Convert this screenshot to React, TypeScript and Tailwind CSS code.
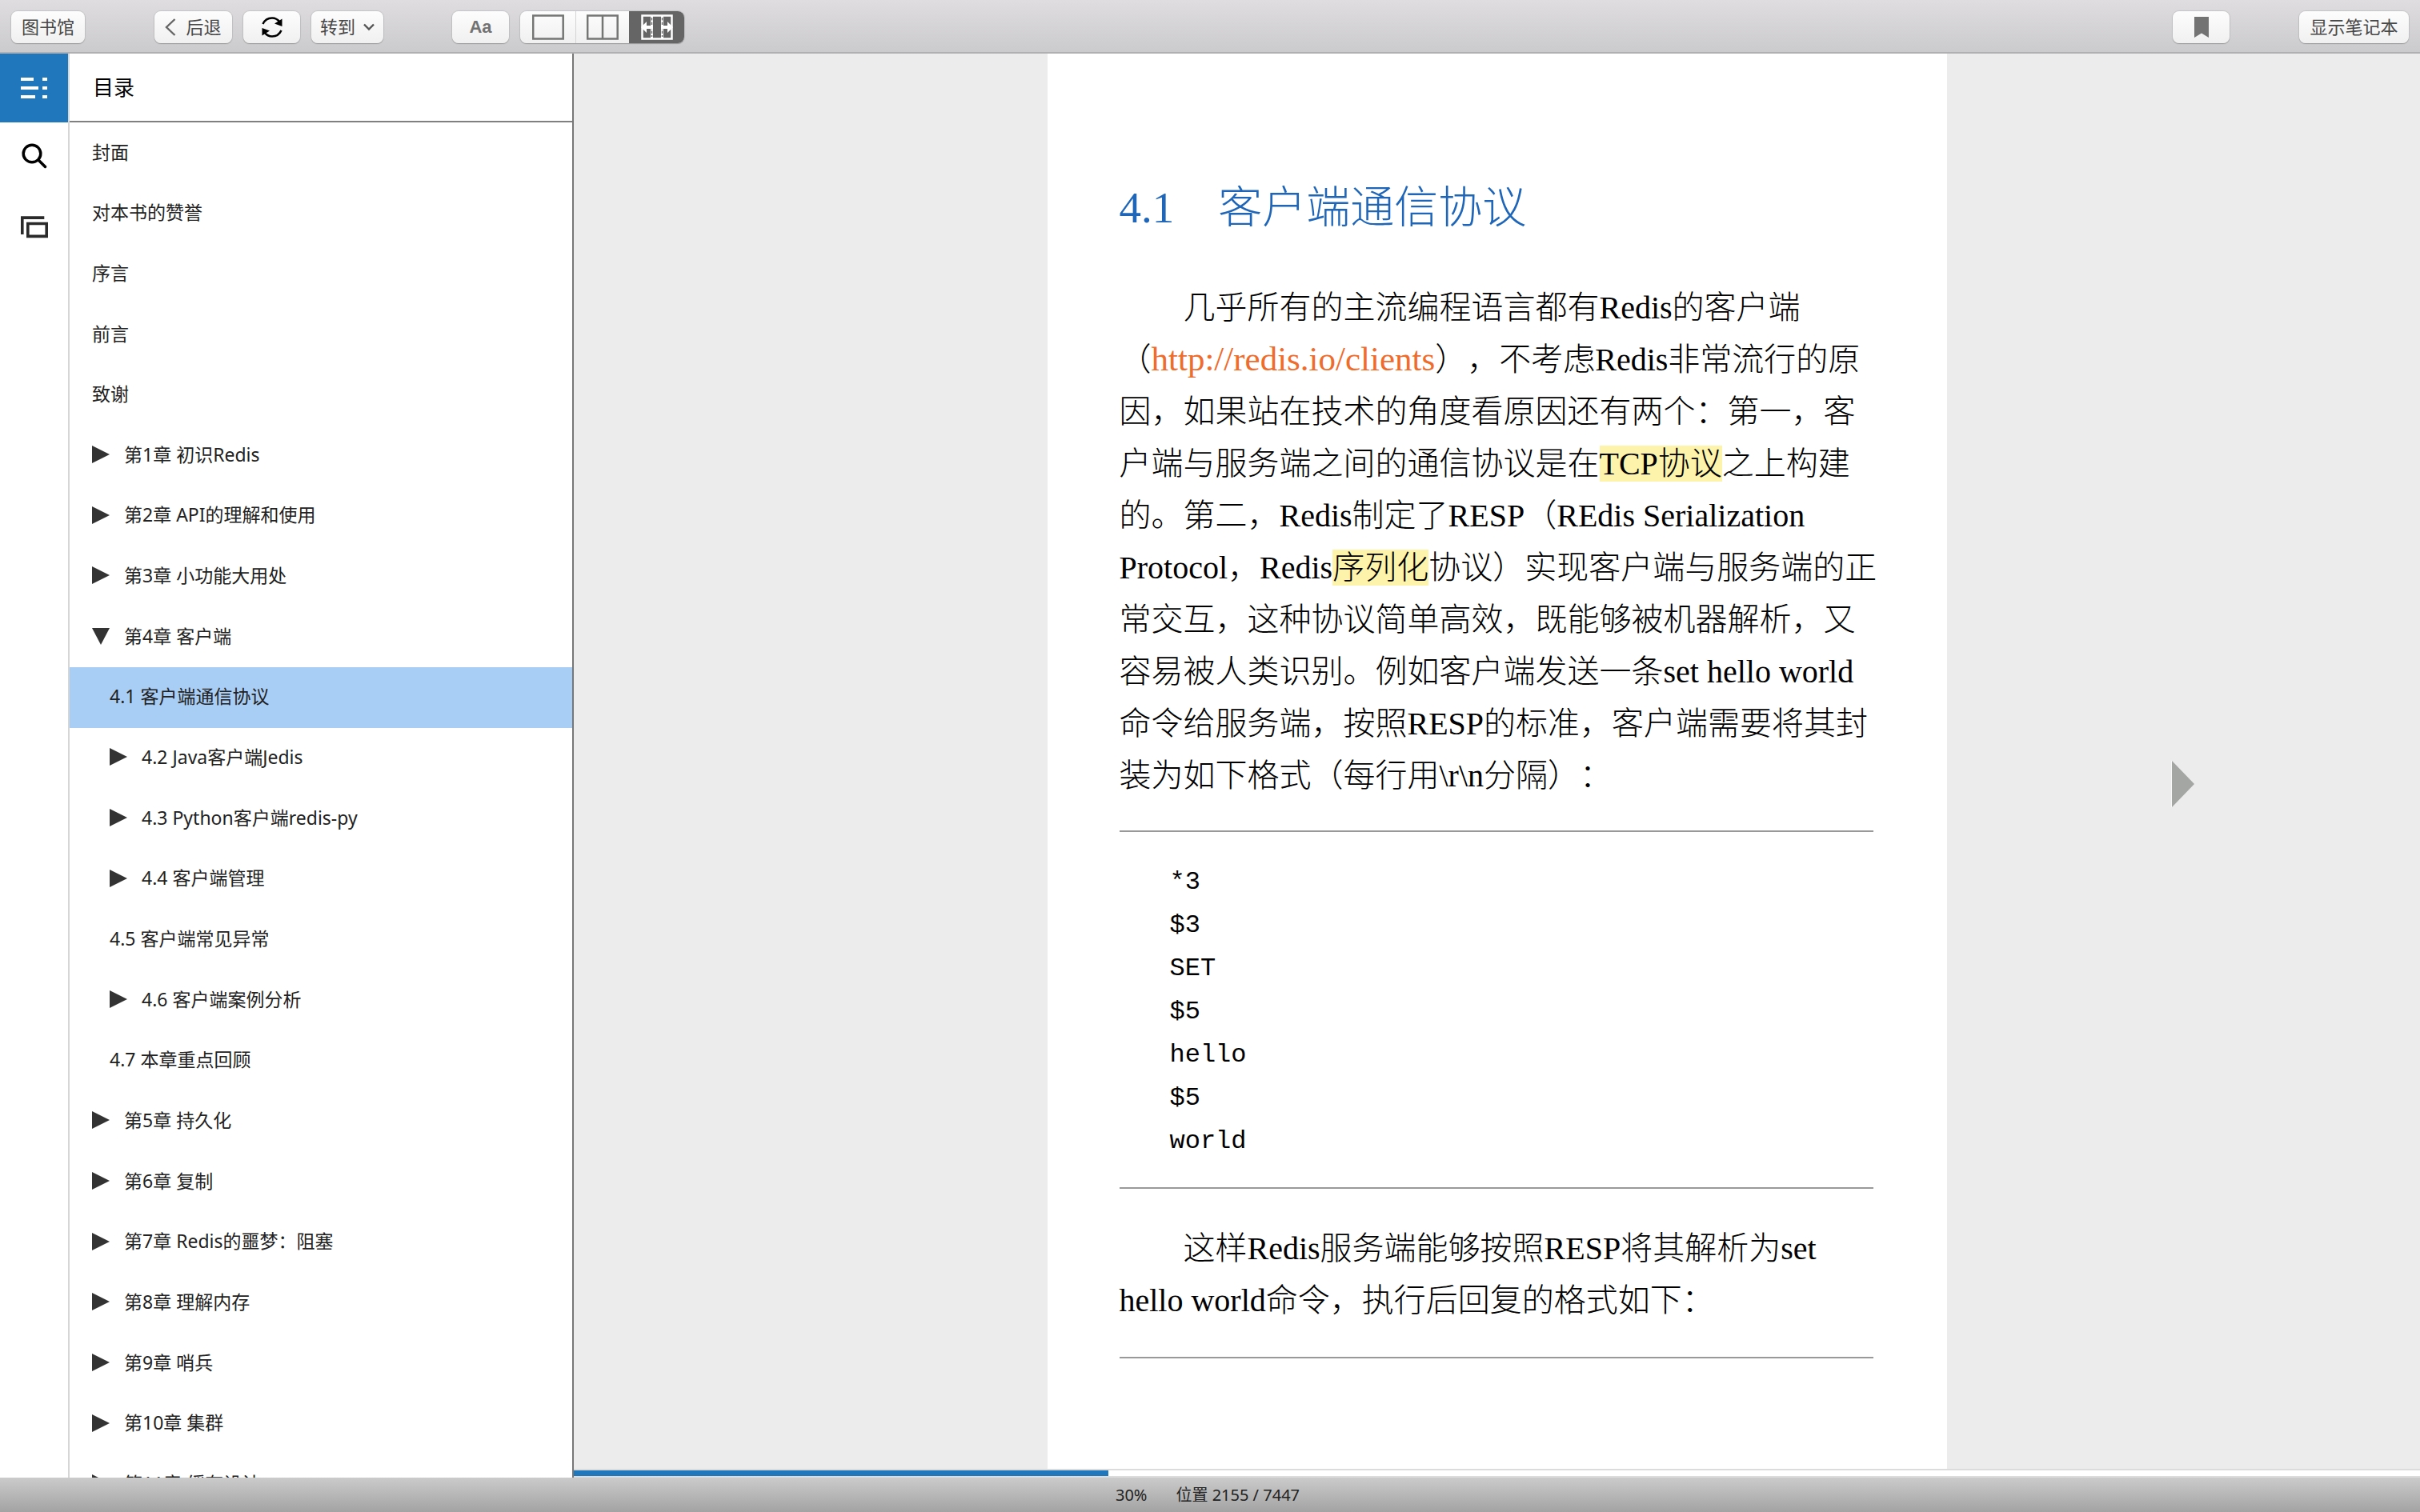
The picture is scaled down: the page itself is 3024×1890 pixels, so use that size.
import type { ReactNode } from "react";

type TocItem = { title: string; level?: 0 | 1; state?: "open" | "closed"; current?: boolean };

const toc: TocItem[] = [
  { title: "封面" },
  { title: "对本书的赞誉" },
  { title: "序言" },
  { title: "前言" },
  { title: "致谢" },
  { title: "第1章 初识Redis", state: "closed" },
  { title: "第2章 API的理解和使用", state: "closed" },
  { title: "第3章 小功能大用处", state: "closed" },
  { title: "第4章 客户端", state: "open" },
  { title: "4.1 客户端通信协议", level: 1, current: true },
  { title: "4.2 Java客户端Jedis", level: 1, state: "closed" },
  { title: "4.3 Python客户端redis-py", level: 1, state: "closed" },
  { title: "4.4 客户端管理", level: 1, state: "closed" },
  { title: "4.5 客户端常见异常", level: 1 },
  { title: "4.6 客户端案例分析", level: 1, state: "closed" },
  { title: "4.7 本章重点回顾", level: 1 },
  { title: "第5章 持久化", state: "closed" },
  { title: "第6章 复制", state: "closed" },
  { title: "第7章 Redis的噩梦：阻塞", state: "closed" },
  { title: "第8章 理解内存", state: "closed" },
  { title: "第9章 哨兵", state: "closed" },
  { title: "第10章 集群", state: "closed" },
  { title: "第11章 缓存设计", state: "closed" },
];

const codeLines = ["*3", "$3", "SET", "$5", "hello", "$5", "world"];

const position = 2155;
const total = 7447;

type ToolButtonProps = { children: ReactNode; className: string; label?: string };

function ToolButton({ children, className, label }: ToolButtonProps) {
  return (
    <button
      type="button"
      aria-label={label}
      className={`flex h-10 items-center justify-center rounded-lg bg-linear-to-b from-[#fdfdfd] to-[#f0f0f0] text-[22px] text-[#484848] shadow-[0_1px_1px_#999,0_0_1px_1px_#c4c3c6] ${className}`}
    >
      {children}
    </button>
  );
}

function ToggleArrow({ open }: { open: boolean }) {
  return (
    <svg width="22" height="22" viewBox="0 0 22 22" fill="#333" aria-hidden="true">
      <path d={open ? "M0 1h22L11 22z" : "M0 0v22L22 11z"} />
    </svg>
  );
}

function Toolbar() {
  return (
    <header className="flex h-[67px] shrink-0 items-center border-b-2 border-[#b0afb1] bg-linear-to-b from-[#dfdde0] to-[#cbcacc] px-3.5 pt-0.5">
      <ToolButton className="w-[92px]">图书馆</ToolButton>
      <div className="ml-[87px] flex gap-3.5">
        <ToolButton className="w-[97px] gap-3">
          <svg width="14" height="22" viewBox="0 0 14 22" fill="none" stroke="#666" strokeWidth="2.4" aria-hidden="true">
            <path d="M12.5 1 2 11l10.5 10" />
          </svg>
          后退
        </ToolButton>
        <ToolButton className="w-[71px]" label="同步">
          <svg width="28" height="28" viewBox="0 0 28 28" fill="none" stroke="#000" strokeWidth="2.6" aria-hidden="true">
            <path d="M2.5 10C5 4.5 9 2.5 14 2.5c4.2 0 7 1.7 9.5 5" />
            <path d="M25.5 18c-2.5 5.5-6.5 7.5-11.5 7.5-4.2 0-7-1.7-9.5-5" />
            <path d="M26.5 3.5V13l-9.5-3.5zM1.5 24.5V15l9.5 3.5z" fill="#000" stroke="none" />
          </svg>
        </ToolButton>
        <ToolButton className="w-[90px] gap-2.5">
          转到
          <svg width="14" height="10" viewBox="0 0 14 10" fill="none" stroke="#555" strokeWidth="2.4" aria-hidden="true">
            <path d="m1 1.5 6 6 6-6" />
          </svg>
        </ToolButton>
      </div>
      <ToolButton className="ml-[86px] w-[71px] font-['Liberation_Sans',sans-serif] font-bold text-[#727272]" label="字体">
        Aa
      </ToolButton>
      <div className="ml-3.5 flex h-10 overflow-hidden rounded-lg bg-linear-to-b from-[#fdfdfd] to-[#f0f0f0] shadow-[0_1px_1px_#999,0_0_1px_1px_#c4c3c6]">
        <button type="button" aria-label="单栏" className="flex w-[70px] items-center justify-center border-r border-[#d4d4d4]">
          <svg width="40" height="32" viewBox="0 0 40 32" fill="none" stroke="#747674" strokeWidth="2.5" aria-hidden="true">
            <path d="M1.2 1.5h37.5v29H1.2z" />
          </svg>
        </button>
        <button type="button" aria-label="双栏" className="flex w-[66px] items-center justify-center">
          <svg width="40" height="32" viewBox="0 0 40 32" fill="none" stroke="#747674" strokeWidth="2.5" aria-hidden="true">
            <path d="M1.2 1.5h37.5v29H1.2zM20 1.5v29" />
          </svg>
        </button>
        <button type="button" aria-label="自动分栏" aria-pressed="true" className="flex w-[69px] items-center justify-center bg-[#656565]">
          <svg width="40" height="32" viewBox="0 0 40 32" fill="none" stroke="#fff" aria-hidden="true">
            <path d="M1.5 1.5h37v29h-37z" strokeWidth="2.5" />
            <path d="M13.5 2v28M26.5 2v28" strokeWidth="3" />
            <path d="M13.5 4v24M26.5 4v24" stroke="#656565" strokeWidth="1.4" strokeDasharray="3.5 2" />
            <path d="m0 16 7-7v5h8v4H7v5zM40 16l-7-7v5h-8v4h8v5z" fill="#fff" stroke="none" />
          </svg>
        </button>
      </div>
      <div className="ml-auto flex gap-[87px]">
        <ToolButton className="w-[71px]" label="书签">
          <svg width="18" height="26" viewBox="0 0 18 26" fill="#737373" aria-hidden="true">
            <path d="M0 0h18v26l-9-5.5L0 26z" />
          </svg>
        </ToolButton>
        <ToolButton className="w-[137px]">显示笔记本</ToolButton>
      </div>
    </header>
  );
}

function Rail() {
  return (
    <nav className="flex w-[87px] shrink-0 flex-col border-r-2 border-[#d6d6d6]" aria-label="工具">
      <button type="button" aria-label="目录" className="flex h-[86px] items-center justify-center bg-[#2077bb]">
        <svg width="34" height="28" viewBox="0 0 34 28" fill="#fff" aria-hidden="true">
          <path d="M0 1h16v4H0zM0 12h22v4H0zM0 23h18v4H0zM27 1h6v4h-6zM27 12h6v4h-6zM27 23h6v4h-6z" />
        </svg>
      </button>
      <button type="button" aria-label="搜索" className="flex h-[84px] items-center justify-center">
        <svg width="32" height="32" viewBox="0 0 32 32" fill="none" stroke="#000" strokeWidth="3.5" strokeLinecap="round" aria-hidden="true">
          <circle cx="13" cy="13" r="10.8" />
          <path d="m21 21 8.5 8.5" />
        </svg>
      </button>
      <button type="button" aria-label="卡片" className="flex h-[94px] items-center justify-center">
        <svg width="34" height="28" viewBox="0 0 34 28" fill="none" stroke="#2a2a2a" strokeWidth="3.6" aria-hidden="true">
          <path d="M1.8 23V2.1h27.5" />
          <path d="M8.8 9.5h23.4v15.9H8.8z" />
        </svg>
      </button>
    </nav>
  );
}

function Sidebar() {
  return (
    <aside className="flex w-[630px] shrink-0 flex-col border-r-2 border-[#777]">
      <h2 className="flex h-[86px] shrink-0 items-center border-b-2 border-[#808080] pl-[29px] text-[26px]">目录</h2>
      <ul className="grid h-[1740px] shrink-0 auto-rows-fr">
        {toc.map((item) => (
          <li key={item.title} className={item.current ? "bg-[#a9cef5]" : ""}>
            <a
              href="#"
              aria-current={item.current ? "page" : undefined}
              className={`flex h-full items-center gap-[18px] pb-0.5 text-[23px] text-[#222] ${item.level ? "pl-[50px]" : "pl-7"}`}
            >
              {item.state && <ToggleArrow open={item.state === "open"} />}
              {item.title}
            </a>
          </li>
        ))}
      </ul>
    </aside>
  );
}

function Rule() {
  return <hr className="border-t-2 border-[#999]" />;
}

function Mark({ children }: { children: ReactNode }) {
  return <mark className="bg-[#fdf3ab] text-black">{children}</mark>;
}

function Page() {
  return (
    <article className="w-[1124px] shrink-0 bg-white pt-40 pr-[92px] pl-[90px] font-['Liberation_Serif','Noto_Sans_CJK_SC',serif] text-[40px] leading-[65px] font-light whitespace-nowrap text-black [text-spacing-trim:space-all]">
      <h1 className="text-[55px] text-[#1f66b8]">4.1　客户端通信协议</h1>
      <p className="mt-[60px] indent-20">
        几乎所有的主流编程语言都有Redis的客户端
        <br />
        （
        <a href="http://redis.io/clients" className="text-[43px] leading-none text-[#ee6c2c]">
          http://redis.io/clients
        </a>
        ），不考虑Redis非常流行的原
        <br />
        因，如果站在技术的角度看原因还有两个：第一，客
        <br />
        户端与服务端之间的通信协议是在<Mark>TCP协议</Mark>之上构建
        <br />
        的。第二，Redis制定了RESP（REdis Serialization
        <br />
        Protocol，Redis<Mark>序列化</Mark>协议）实现客户端与服务端的正
        <br />
        常交互，这种协议简单高效，既能够被机器解析，又
        <br />
        容易被人类识别。例如客户端发送一条set hello world
        <br />
        命令给服务端，按照RESP的标准，客户端需要将其封
        <br />
        装为如下格式（每行用\r\n分隔）：
      </p>
      <div className="mt-9">
        <Rule />
        <pre className="pt-9 pb-[30px] pl-[63px] font-['Liberation_Mono',monospace] text-[32px] leading-[54px] font-normal">
          {codeLines.join("\n")}
        </pre>
        <Rule />
      </div>
      <p className="mt-[42px] indent-20">
        这样Redis服务端能够按照RESP将其解析为set
        <br />
        hello world命令，执行后回复的格式如下：
      </p>
      <div className="mt-[38px]">
        <Rule />
      </div>
    </article>
  );
}

function Reader() {
  return (
    <main className="flex min-w-0 flex-1 flex-col bg-[#ececec]">
      <div className="flex min-h-0 flex-1 overflow-hidden">
        <div className="flex-1" />
        <Page />
        <div className="flex flex-1 items-center justify-center pt-14">
          <button type="button" aria-label="下一页">
            <svg width="30" height="58" viewBox="0 0 30 58" aria-hidden="true">
              <path d="M1 0v58l28-29z" fill="#a3a6a3" />
              <path d="M.5 0v58" stroke="#f8f8f8" />
            </svg>
          </button>
        </div>
      </div>
      <div
        role="progressbar"
        aria-label="阅读进度"
        aria-valuenow={position}
        aria-valuemax={total}
        className="h-[11px] shrink-0 border-y-2 border-[#dcdcdc] bg-white"
      >
        <div className="h-full bg-[#2077bb]" style={{ width: `${(position / total) * 100}%` }} />
      </div>
    </main>
  );
}

export default function App() {
  return (
    <div className="flex h-screen flex-col overflow-hidden bg-white font-['Noto_Sans','Noto_Sans_CJK_SC',sans-serif] text-black">
      <Toolbar />
      <div className="flex min-h-0 flex-1 overflow-hidden">
        <Rail />
        <Sidebar />
        <Reader />
      </div>
      <footer className="flex h-[43px] shrink-0 items-center justify-center gap-9 bg-linear-to-b from-[#cbcbcb] to-[#a3a3a3] pr-1.5 text-xl text-[#222]">
        <span>30%</span>
        <span>
          位置 {position} / {total}
        </span>
      </footer>
    </div>
  );
}
